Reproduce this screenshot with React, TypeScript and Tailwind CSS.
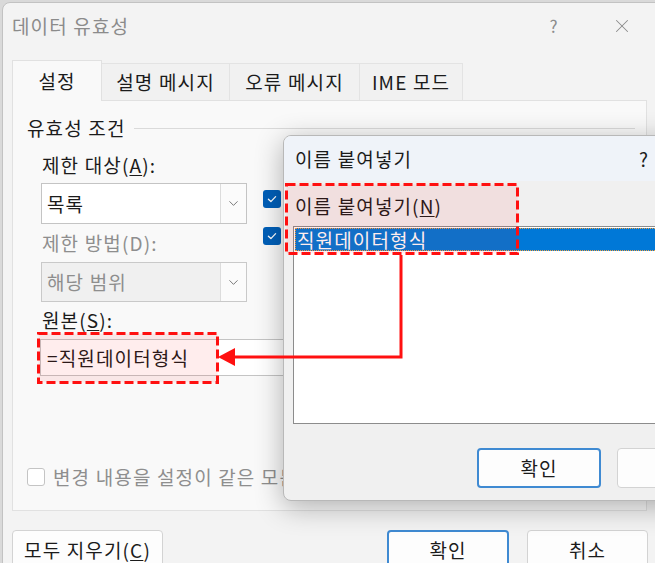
import React from "react";
import { ChevronDown, X } from "lucide-react";

const Tick = () => (
  <svg viewBox="0 0 12 12" className="w-[12px] h-[12px]">
    <path d="M2.4 6.3 4.9 8.6 9.6 3.6" fill="none" stroke="white" strokeWidth="1.3" strokeLinecap="round" strokeLinejoin="round" />
  </svg>
);

const BlueCheck = () => (
  <div className="shrink-0 w-[18px] h-[18px] rounded-[3px] bg-[#005fb8] flex items-center justify-center">
    <Tick />
  </div>
);

const Btn = ({ children, primary, className }: { children?: React.ReactNode; primary?: boolean; className?: string }) => (
  <div
    className={
      "shrink-0 h-[40px] rounded-[4px] flex items-center justify-center bg-[#fdfdfd] " +
      (primary ? "border-2 border-[#3f8ad2] " : "border border-[#d3d3d3] ") +
      (className ?? "")
    }
  >
    {children}
  </div>
);

const Combo = ({ text, disabled }: { text: string; disabled?: boolean }) => (
  <div
    className={
      "shrink-0 flex w-[206px] h-full border " +
      (disabled ? "bg-[#f0f0f0] border-[#c9c9c9] text-[#8e8e8e]" : "bg-white border-[#c4c4c4]")
    }
  >
    <div className="flex-1 flex items-center pl-[5px]">{text}</div>
    <div className="w-[26px] flex items-center justify-center border-l border-[#dcdcdc] bg-[#fbfbfb]">
      <ChevronDown size={15} strokeWidth={1.3} className="text-[#5a5a5a]" />
    </div>
  </div>
);

export default function App() {
  return (
    <div className="relative w-[655px] h-[563px] overflow-hidden bg-[#d9d9d9] pl-[2px] pt-[2px] font-['Noto_Sans_CJK_KR',sans-serif] text-[19px] tracking-[0.06em] leading-[26px] text-[#1b1b1b]">
      {/* 데이터 유효성 window */}
      <div className="w-[657px] h-[620px] rounded-tl-[8px] border border-[#c2c2c2] bg-[#f3f3f3] flex flex-col">
        <div className="h-[46px] flex items-center pl-[9px] pr-[13px] text-[#8b8b8b]">
          <span>데이터 유효성</span>
          <span className="flex-1" />
          <span className="w-[46px] text-center text-[17px]">?</span>
          <span className="w-[22px]" />
          <span className="w-[46px] flex justify-center">
            <X size={22} strokeWidth={1.1} />
          </span>
        </div>

        {/* tabs */}
        <div className="mt-[11px] ml-[9px] flex items-end">
          <div className="relative z-10 -mb-px h-[41px] w-[90px] flex items-center justify-center bg-[#f9f9f9] border border-b-0 border-[#e1e1e1]">
            설정
          </div>
          <div className="h-[37px] w-[128px] flex items-center justify-center bg-[#f1f1f1] border border-l-0 border-b-0 border-[#e3e3e3]">
            설명 메시지
          </div>
          <div className="h-[37px] w-[130px] flex items-center justify-center bg-[#f1f1f1] border border-l-0 border-b-0 border-[#e3e3e3]">
            오류 메시지
          </div>
          <div className="h-[37px] w-[103px] flex items-center justify-center bg-[#f1f1f1] border border-l-0 border-b-0 border-[#e3e3e3]">
            IME 모드
          </div>
        </div>

        {/* panel */}
        <div className="ml-[9px] w-[635px] h-[411px] border border-[#e1e1e1] bg-[#f9f9f9] flex flex-col">
          <div className="mt-[14px] h-[26px] flex items-center pl-[14px] pr-[11px]">
            <span>유효성 조건</span>
            <div className="flex-1 ml-[8px] h-px bg-[#dadada]" />
          </div>

          <div className="pl-[28px]">
            <div className="mt-[11px] h-[26px] pl-[1px]">
              제한 대상(<span className="underline underline-offset-2">A</span>):
            </div>
            <div className="mt-[5px] h-[41px] flex items-start">
              <Combo text="목록" />
              <div className="ml-[16px] pt-[7px] flex flex-col gap-[19px]">
                <BlueCheck />
                <BlueCheck />
              </div>
            </div>
            <div className="mt-[6px] h-[26px] pl-[1px] text-[#8e8e8e]">제한 방법(D):</div>
            <div className="mt-[6px] h-[40px]">
              <Combo text="해당 범위" disabled />
            </div>
            <div className="mt-[5px] h-[26px] pl-[1px]">
              원본(<span className="underline underline-offset-2">S</span>):
            </div>
            <div className="mt-[6px] -ml-px h-[37px] w-[580px] bg-white border border-[#c4c4c4] flex items-center pl-[6px]">
              =직원데이터형식
            </div>
          </div>

          <div className="mt-auto mb-[20px] pl-[14px] flex items-center">
            <div className="w-[18px] h-[18px] rounded-[3px] border border-[#c4c4c4] bg-white" />
            <span className="ml-[8px] text-[#8e8e8e] whitespace-nowrap">변경 내용을 설정이 같은 모든 셀에 적용(P)</span>
          </div>
        </div>

        {/* bottom buttons */}
        <div className="mt-[19px] flex">
          <Btn className="ml-[9px] w-[151px]">
            <span>
              모두 지우기(<span className="underline underline-offset-2">C</span>)
            </span>
          </Btn>
          <Btn primary className="ml-[224px] w-[122px]">확인</Btn>
          <Btn className="ml-[18px] w-[121px]">취소</Btn>
        </div>
      </div>

      {/* 이름 붙여넣기 dialog */}
      <div className="absolute left-[283px] top-[135px] w-[440px] h-[366px] rounded-[8px] border border-[#b8b8b8] bg-[#f0f0f0] overflow-hidden flex flex-col shadow-[0_6px_28px_rgba(0,0,0,0.3)]">
        <div className="h-[45px] shrink-0 bg-[#eff3f9] flex items-center pl-[11px] pr-[9px]">
          <span>이름 붙여넣기</span>
          <span className="flex-1" />
          <span className="w-[46px] text-center">?</span>
          <span className="w-[46px] flex justify-center">
            <X size={22} strokeWidth={1.1} />
          </span>
        </div>
        <div className="flex flex-col pl-[11px]">
          <div className="mt-[12px] h-[26px]">
            이름 붙여넣기(<span className="underline underline-offset-2">N</span>)
          </div>
          <div className="mt-[7px] -ml-[2px] h-[198px] border border-[#8c8c8c] bg-white">
            <div className="mt-px ml-px h-[23px] bg-[#0078d7] text-white pl-[2px] flex items-center outline-1 outline-dotted outline-[#f0a040] -outline-offset-1">
              직원데이터형식
            </div>
          </div>
          <div className="mt-[24px] flex">
            <Btn primary className="ml-[182px] w-[124px]">확인</Btn>
            <Btn className="ml-[16px] w-[124px]" />
          </div>
        </div>
      </div>

      {/* red annotations */}
      <svg className="absolute left-0 top-0 w-[655px] h-[563px] pointer-events-none" viewBox="0 0 655 563">
        <rect x="286.5" y="184.5" width="231" height="69" fill="rgba(255,0,0,0.07)" stroke="#ff1010" strokeWidth="3" strokeDasharray="9 4" />
        <rect x="38.5" y="333.5" width="179" height="49" fill="rgba(255,0,0,0.07)" stroke="#ff1010" strokeWidth="3" strokeDasharray="9 4" />
        <path d="M401 255 V357 H232" fill="none" stroke="#ff1010" strokeWidth="3" />
        <polygon points="218,357 235,348 235,366" fill="#ff1010" />
      </svg>
    </div>
  );
}
